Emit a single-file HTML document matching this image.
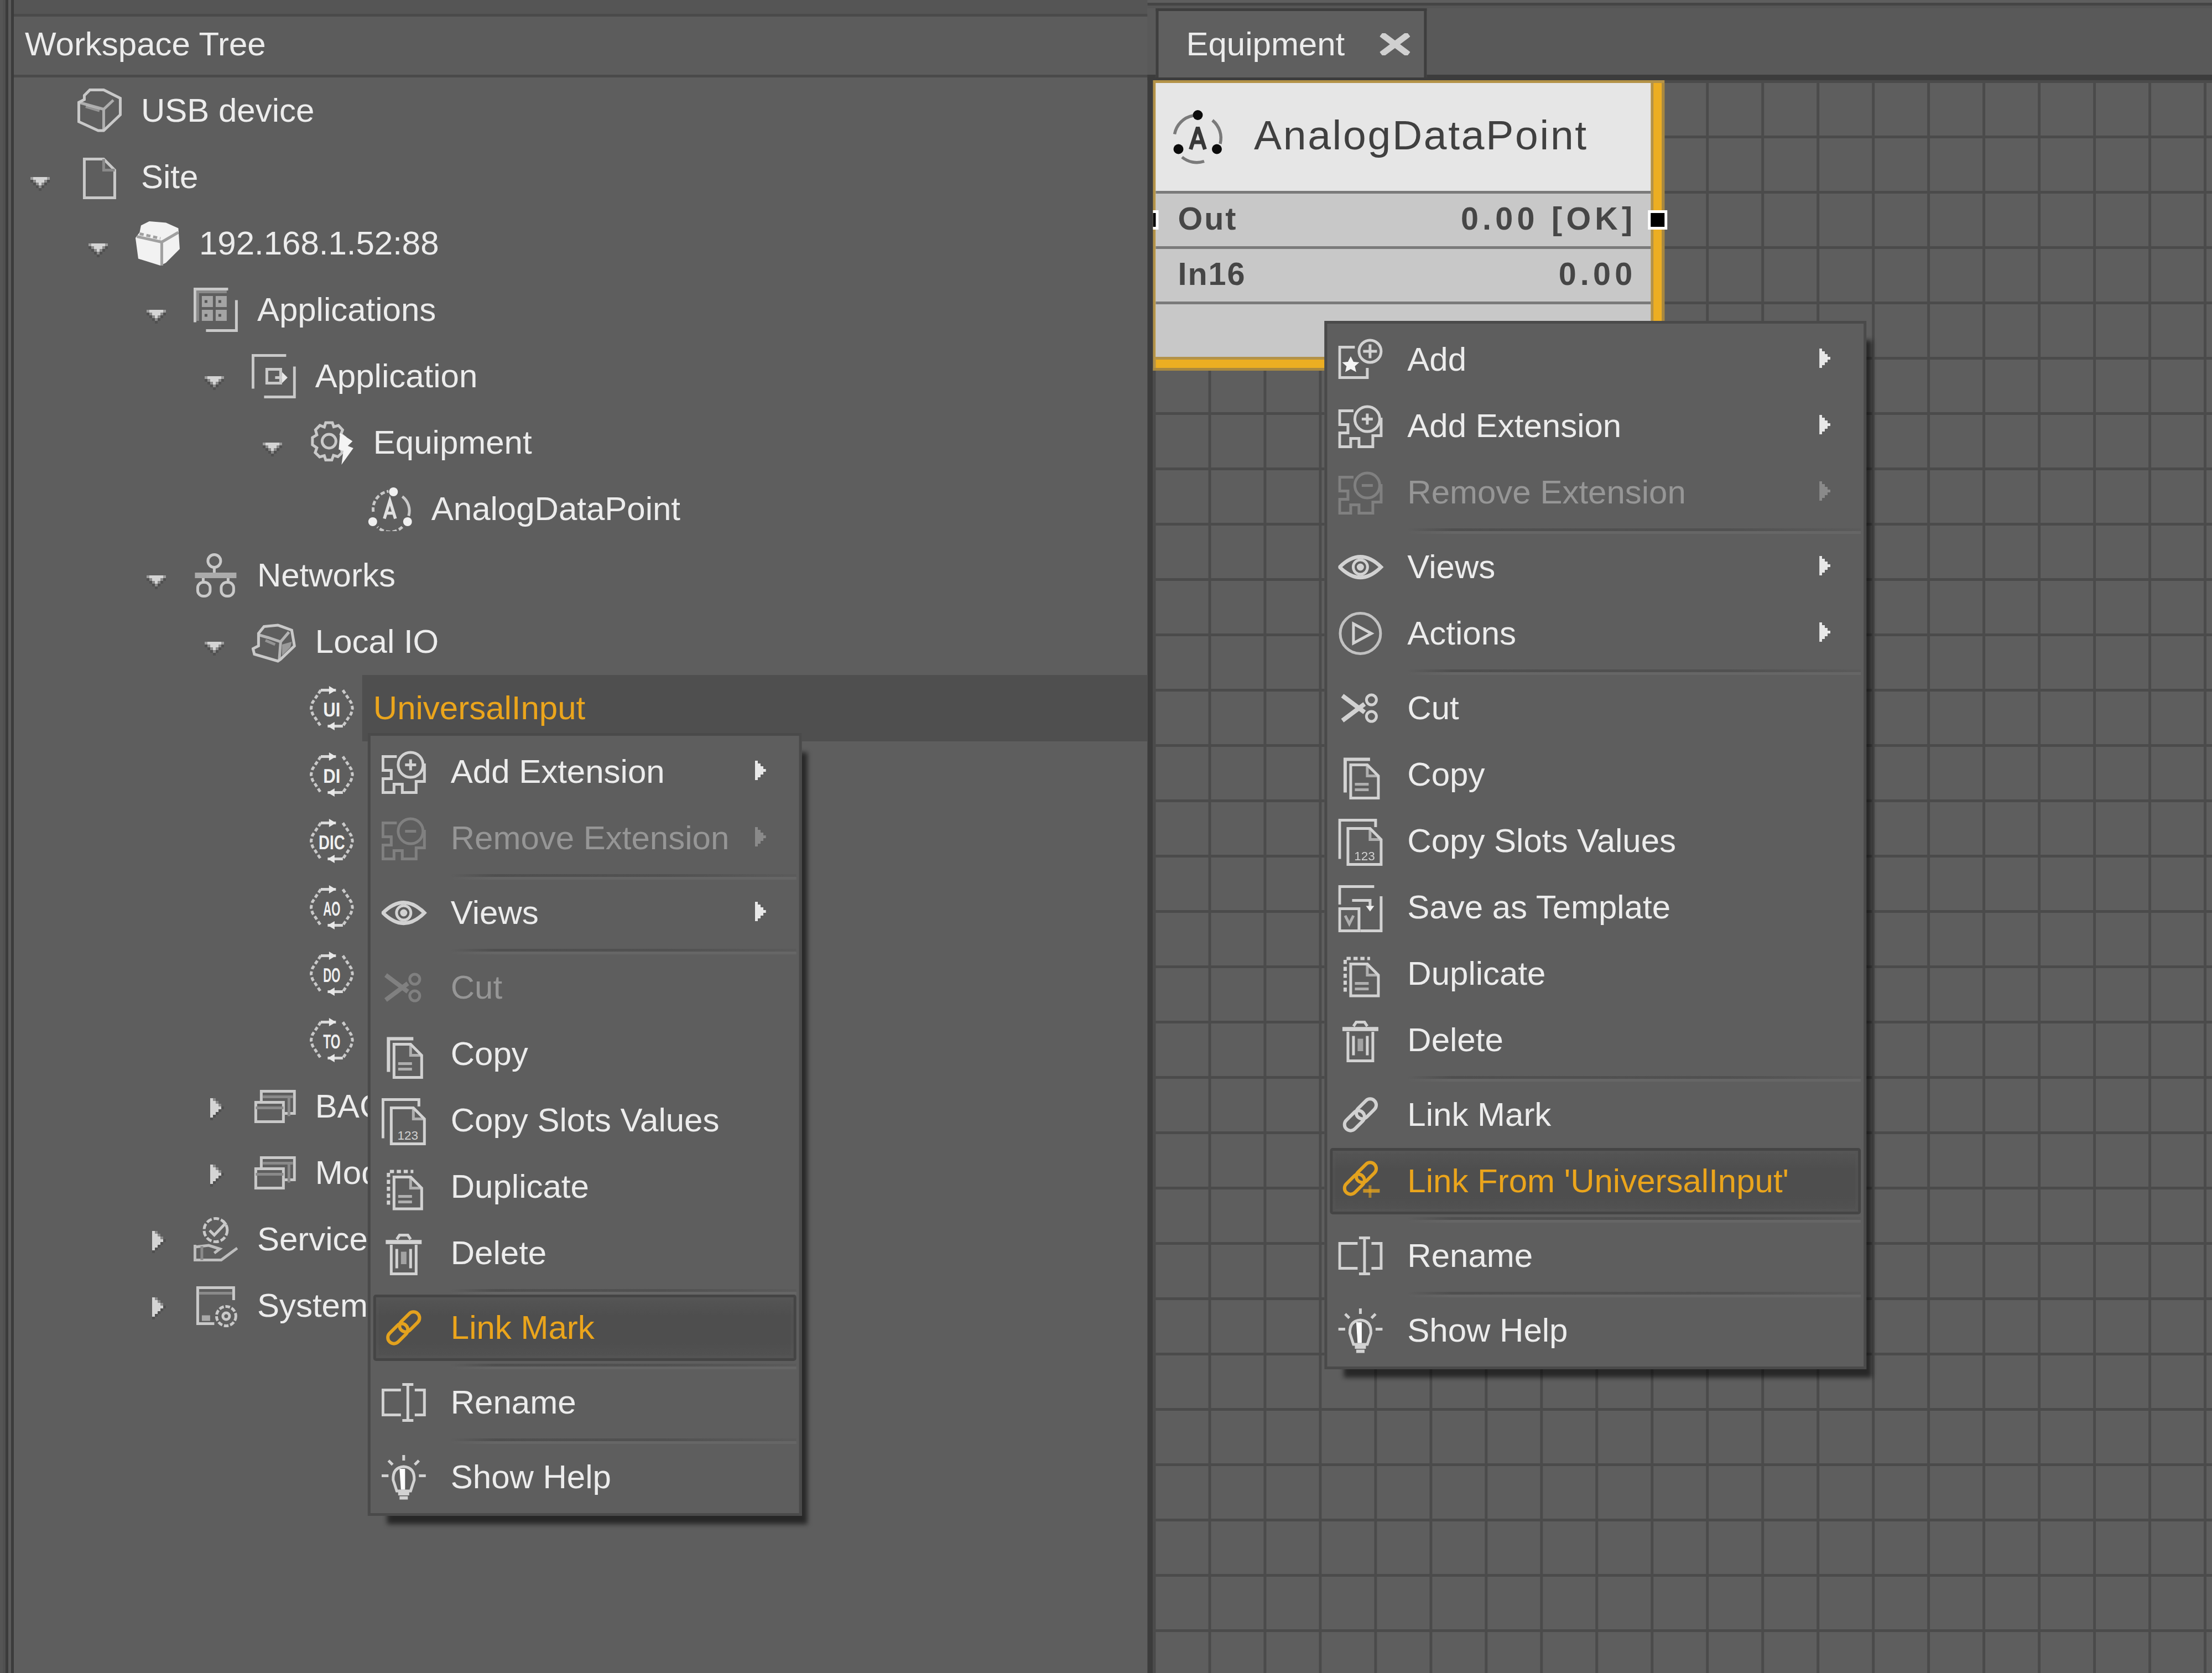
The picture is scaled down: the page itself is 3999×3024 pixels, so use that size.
<!DOCTYPE html>
<html><head><meta charset="utf-8"><title>Workspace</title><style>
html,body{margin:0;padding:0;width:3999px;height:3024px;overflow:hidden;background:#5e5e5e}
#s{position:absolute;left:0;top:0;width:800px;height:605px;transform:scale(4.998750,5.000000);transform-origin:0 0;overflow:hidden;font-family:"Liberation Sans",sans-serif;font-size:12px;color:#ececec}
.a{position:absolute;display:block}
.t{position:absolute;white-space:nowrap;height:24px}
</style></head><body><div id="s">
<div class="a" style="left:0px;top:0px;width:1px;height:605px;background:#555555;"></div>
<div class="a" style="left:1px;top:0px;width:1px;height:605px;background:#505050;"></div>
<div class="a" style="left:2px;top:0px;width:1px;height:605px;background:#3c3c3c;"></div>
<div class="a" style="left:3px;top:0px;width:1px;height:605px;background:#5b5b5b;"></div>
<div class="a" style="left:4px;top:0px;width:1px;height:605px;background:#3c3c3c;"></div>
<div class="a" style="left:5px;top:0px;width:410px;height:5px;background:#555555;"></div>
<div class="a" style="left:5px;top:5px;width:410px;height:1px;background:#4a4a4a;"></div>
<div class="a" style="left:5px;top:6px;width:410px;height:21px;background:#5c5c5c;"></div>
<div class="a" style="left:5px;top:27px;width:410px;height:1px;background:#4a4a4a;"></div>
<div class="a" style="left:5px;top:28px;width:410px;height:577px;background:#5e5e5e;"></div>
<div class="t" style="left:9px;top:3.84px;color:#ececec;font-size:12px;font-weight:normal;line-height:24px;">Workspace Tree</div>
<div class="a" style="left:415px;top:0px;width:385px;height:1px;background:#5e5e5e;"></div>
<div class="a" style="left:415px;top:1px;width:385px;height:1px;background:#454545;"></div>
<div class="a" style="left:415px;top:2px;width:385px;height:1px;background:#555555;"></div>
<div class="a" style="left:415px;top:3px;width:385px;height:24px;background:#595959;"></div>
<div class="a" style="left:415px;top:27px;width:385px;height:2px;background:#3c3c3c;"></div>
<div class="a" style="left:415px;top:27px;width:4px;height:578px;background:#3c3c3c;"></div>
<div class="a" style="left:417px;top:29px;width:383px;height:576px;background:#5e5e5e;background-image:linear-gradient(to right,#4b4b4b 1px,transparent 1px),linear-gradient(to bottom,#4b4b4b 1px,transparent 1px);background-size:20px 20px;"></div>
<div class="a" style="left:418px;top:3px;width:98px;height:25px;background:#5f5f5f;box-sizing:border-box;border:1px solid #3e3e3e;border-bottom:none;"></div>
<div class="t" style="left:429px;top:3.84px;color:#ececec;font-size:12px;font-weight:normal;line-height:24px;">Equipment</div>
<svg class="a" style="left:499px;top:12px;" width="11" height="8" viewBox="0 0 11 8"><path d="M1.5 1 L9.5 7 M9.5 1 L1.5 7" stroke="#d0d0d0" stroke-width="2.2" stroke-linecap="square"/></svg>
<div class="a" style="left:417px;top:29px;width:185px;height:105px;background:#b39248;"></div>
<div class="a" style="left:418px;top:30px;width:183px;height:103px;background:#ecae22;"></div>
<div class="a" style="left:418px;top:30px;width:179px;height:99px;background:#e6e6e6;"></div>
<div class="a" style="left:597px;top:29px;width:1px;height:1px;background:#b39248;"></div>
<div class="a" style="left:597px;top:30px;width:1px;height:99px;background:#b39248;"></div>
<div class="a" style="left:601px;top:30px;width:1px;height:104px;background:#a88840;"></div>
<div class="a" style="left:417px;top:133px;width:185px;height:1px;background:#a88840;"></div>
<div class="a" style="left:418px;top:129px;width:179px;height:1px;background:#b39248;"></div>
<div class="a" style="left:418px;top:30px;width:179px;height:39px;background:#e6e6e6;"></div>
<div class="a" style="left:418px;top:69px;width:179px;height:1px;background:#7a7a7a;"></div>
<div class="a" style="left:418px;top:70px;width:179px;height:19px;background:#c8c8c8;"></div>
<div class="a" style="left:418px;top:89px;width:179px;height:1px;background:#7a7a7a;"></div>
<div class="a" style="left:418px;top:90px;width:179px;height:19px;background:#c8c8c8;"></div>
<div class="a" style="left:418px;top:109px;width:179px;height:1px;background:#7a7a7a;"></div>
<div class="a" style="left:418px;top:110px;width:179px;height:19px;background:#c8c8c8;"></div>
<svg class="a" style="left:423px;top:39px;" width="20" height="21" viewBox="0 0 20 21"><g fill="none" stroke="#7a7a7a" stroke-width="1.1"><path d="M1.8 9.5 A8.3 8.3 0 0 1 8.5 2.8"/><path d="M15.5 4.5 A8.3 8.3 0 0 1 18.3 13"/><path d="M4.5 17.8 A8.3 8.3 0 0 0 12.5 19.3"/></g><g fill="#0c0c0c"><circle cx="10.2" cy="2.6" r="1.8"/><circle cx="3.2" cy="14.9" r="1.8"/><circle cx="17.1" cy="14.9" r="1.8"/></g><path d="M7.6 15 L10.2 7 L12.8 15 M8.5 12.4 L11.9 12.4" stroke="#383838" stroke-width="1.4" stroke-linejoin="bevel" fill="none"/></svg>
<div class="t" style="left:453.5px;top:37.10px;color:#404040;font-size:15px;font-weight:normal;line-height:24px;letter-spacing:0.55px;">AnalogDataPoint</div>
<div class="t" style="left:426px;top:67.02px;color:#464646;font-size:11.5px;font-weight:bold;line-height:24px;letter-spacing:0.6px;">Out</div>
<div class="t" style="right:208.15000000000003px;top:67.00px;color:#464646;font-size:11.5px;font-weight:bold;line-height:24px;letter-spacing:1.45px;">0.00 [OK]</div>
<div class="t" style="left:426px;top:87.02px;color:#464646;font-size:11.5px;font-weight:bold;line-height:24px;letter-spacing:0.4px;">In16</div>
<div class="t" style="right:208.15000000000003px;top:87.00px;color:#464646;font-size:11.5px;font-weight:bold;line-height:24px;letter-spacing:1.45px;">0.00</div>
<div class="a" style="left:596px;top:76px;width:7px;height:7px;background:#ffffff;"></div>
<div class="a" style="left:597px;top:77px;width:5px;height:5px;background:#000000;"></div>
<div class="a" style="left:417px;top:76px;width:2px;height:7px;background:#ffffff;"></div>
<div class="a" style="left:417px;top:77px;width:1px;height:5px;background:#000000;"></div>
<div class="a" style="left:131px;top:244px;width:284px;height:24px;background:#4f4f4f;"></div>
<svg class="a" style="left:28px;top:32px;" width="16" height="16" viewBox="0 0 16 16"><g fill="none" stroke="#c9c9c9"><path d="M4.5 0.5 L9.5 0.5 L15.5 3.5 L15.5 9.5 L9.5 15.2 L7.5 15.2 L0.5 12 L0.5 5 L2.5 4 L2.5 2.5 Z"/><path d="M0.5 5 L9.5 7.5 L9.5 15 M9.5 7.5 L13 4.2" stroke-opacity=".75"/><path d="M3 6.5 L8 8" stroke-opacity=".5"/></g></svg>
<div class="t" style="left:51px;top:27.84px;color:#ececec;font-size:12px;font-weight:normal;line-height:24px;">USB device</div>
<svg class="a" style="left:11px;top:64px;" width="7" height="5" viewBox="0 0 7 5"><g shape-rendering="crispEdges"><rect x="0" y="0" width="1" height="1" fill="#9c9c9c"/><rect x="1" y="0" width="1" height="1" fill="#d4d4d4"/><rect x="2" y="0" width="1" height="1" fill="#d4d4d4"/><rect x="3" y="0" width="1" height="1" fill="#d4d4d4"/><rect x="4" y="0" width="1" height="1" fill="#d4d4d4"/><rect x="5" y="0" width="1" height="1" fill="#d4d4d4"/><rect x="6" y="0" width="1" height="1" fill="#9c9c9c"/><rect x="0" y="1" width="1" height="1" fill="#505050"/><rect x="1" y="1" width="1" height="1" fill="#8a8a8a"/><rect x="2" y="1" width="1" height="1" fill="#d4d4d4"/><rect x="3" y="1" width="1" height="1" fill="#d4d4d4"/><rect x="4" y="1" width="1" height="1" fill="#d4d4d4"/><rect x="5" y="1" width="1" height="1" fill="#8a8a8a"/><rect x="6" y="1" width="1" height="1" fill="#505050"/><rect x="1" y="2" width="1" height="1" fill="#505050"/><rect x="2" y="2" width="1" height="1" fill="#8a8a8a"/><rect x="3" y="2" width="1" height="1" fill="#d4d4d4"/><rect x="4" y="2" width="1" height="1" fill="#8a8a8a"/><rect x="5" y="2" width="1" height="1" fill="#505050"/><rect x="2" y="3" width="1" height="1" fill="#505050"/><rect x="3" y="3" width="1" height="1" fill="#8a8a8a"/><rect x="4" y="3" width="1" height="1" fill="#505050"/><rect x="3" y="4" width="1" height="1" fill="#505050"/></g></svg>
<svg class="a" style="left:28px;top:56px;" width="16" height="16" viewBox="0 0 16 16"><g fill="none" stroke="#c9c9c9"><path d="M2.5 1.5 L9.5 1.5 L13.5 5.5 L13.5 15.5 L2.5 15.5 Z"/><path d="M9.5 1.5 L9.5 5.5 L13.5 5.5" stroke="#8a8a8a"/></g></svg>
<div class="t" style="left:51px;top:51.84px;color:#ececec;font-size:12px;font-weight:normal;line-height:24px;">Site</div>
<svg class="a" style="left:32px;top:88px;" width="7" height="5" viewBox="0 0 7 5"><g shape-rendering="crispEdges"><rect x="0" y="0" width="1" height="1" fill="#9c9c9c"/><rect x="1" y="0" width="1" height="1" fill="#d4d4d4"/><rect x="2" y="0" width="1" height="1" fill="#d4d4d4"/><rect x="3" y="0" width="1" height="1" fill="#d4d4d4"/><rect x="4" y="0" width="1" height="1" fill="#d4d4d4"/><rect x="5" y="0" width="1" height="1" fill="#d4d4d4"/><rect x="6" y="0" width="1" height="1" fill="#9c9c9c"/><rect x="0" y="1" width="1" height="1" fill="#505050"/><rect x="1" y="1" width="1" height="1" fill="#8a8a8a"/><rect x="2" y="1" width="1" height="1" fill="#d4d4d4"/><rect x="3" y="1" width="1" height="1" fill="#d4d4d4"/><rect x="4" y="1" width="1" height="1" fill="#d4d4d4"/><rect x="5" y="1" width="1" height="1" fill="#8a8a8a"/><rect x="6" y="1" width="1" height="1" fill="#505050"/><rect x="1" y="2" width="1" height="1" fill="#505050"/><rect x="2" y="2" width="1" height="1" fill="#8a8a8a"/><rect x="3" y="2" width="1" height="1" fill="#d4d4d4"/><rect x="4" y="2" width="1" height="1" fill="#8a8a8a"/><rect x="5" y="2" width="1" height="1" fill="#505050"/><rect x="2" y="3" width="1" height="1" fill="#505050"/><rect x="3" y="3" width="1" height="1" fill="#8a8a8a"/><rect x="4" y="3" width="1" height="1" fill="#505050"/><rect x="3" y="4" width="1" height="1" fill="#505050"/></g></svg>
<svg class="a" style="left:49px;top:80px;" width="16" height="16" viewBox="0 0 16 16"><path d="M2 1.5 L5 0 L11 0.5 L15.5 2.5 L16 10 L11 15 L9 16 L1 13.5 L0 6 L1.5 4 Z" fill="#f2f2f2"/><g fill="none" stroke="#a0a0a0"><path d="M0.5 5.5 L9.5 7.5 L15.5 4"/><path d="M1.5 4.5 L9 6.2" stroke-dasharray="1.5 1"/><path d="M9.5 7.5 L9.5 16"/></g></svg>
<div class="t" style="left:72px;top:75.84px;color:#ececec;font-size:12px;font-weight:normal;line-height:24px;">192.168.1.52:88</div>
<svg class="a" style="left:53px;top:112px;" width="7" height="5" viewBox="0 0 7 5"><g shape-rendering="crispEdges"><rect x="0" y="0" width="1" height="1" fill="#9c9c9c"/><rect x="1" y="0" width="1" height="1" fill="#d4d4d4"/><rect x="2" y="0" width="1" height="1" fill="#d4d4d4"/><rect x="3" y="0" width="1" height="1" fill="#d4d4d4"/><rect x="4" y="0" width="1" height="1" fill="#d4d4d4"/><rect x="5" y="0" width="1" height="1" fill="#d4d4d4"/><rect x="6" y="0" width="1" height="1" fill="#9c9c9c"/><rect x="0" y="1" width="1" height="1" fill="#505050"/><rect x="1" y="1" width="1" height="1" fill="#8a8a8a"/><rect x="2" y="1" width="1" height="1" fill="#d4d4d4"/><rect x="3" y="1" width="1" height="1" fill="#d4d4d4"/><rect x="4" y="1" width="1" height="1" fill="#d4d4d4"/><rect x="5" y="1" width="1" height="1" fill="#8a8a8a"/><rect x="6" y="1" width="1" height="1" fill="#505050"/><rect x="1" y="2" width="1" height="1" fill="#505050"/><rect x="2" y="2" width="1" height="1" fill="#8a8a8a"/><rect x="3" y="2" width="1" height="1" fill="#d4d4d4"/><rect x="4" y="2" width="1" height="1" fill="#8a8a8a"/><rect x="5" y="2" width="1" height="1" fill="#505050"/><rect x="2" y="3" width="1" height="1" fill="#505050"/><rect x="3" y="3" width="1" height="1" fill="#8a8a8a"/><rect x="4" y="3" width="1" height="1" fill="#505050"/><rect x="3" y="4" width="1" height="1" fill="#505050"/></g></svg>
<svg class="a" style="left:70px;top:104px;" width="16" height="16" viewBox="0 0 16 16"><g fill="none" stroke="#c9c9c9"><path d="M0.5 12.5 L0.5 0.5 L12.5 0.5"/><path d="M4.5 15.5 L15.5 15.5 L15.5 4.5"/><path d="M1.5 12 L1.5 1.5 L12 1.5" stroke="#8a8a8a"/></g><g fill="#a4a4a4"><rect x="3" y="3" width="4" height="4"/><rect x="8" y="3" width="4" height="4"/><rect x="3" y="8" width="4" height="4"/><rect x="8" y="8" width="4" height="4"/></g><g fill="#555"><rect x="4" y="4.5" width="1" height="1"/><rect x="9" y="4.5" width="1" height="1"/><rect x="4" y="9.5" width="1" height="1"/><rect x="9" y="9.5" width="1" height="1"/></g></svg>
<div class="t" style="left:93px;top:99.84px;color:#ececec;font-size:12px;font-weight:normal;line-height:24px;">Applications</div>
<svg class="a" style="left:74px;top:136px;" width="7" height="5" viewBox="0 0 7 5"><g shape-rendering="crispEdges"><rect x="0" y="0" width="1" height="1" fill="#9c9c9c"/><rect x="1" y="0" width="1" height="1" fill="#d4d4d4"/><rect x="2" y="0" width="1" height="1" fill="#d4d4d4"/><rect x="3" y="0" width="1" height="1" fill="#d4d4d4"/><rect x="4" y="0" width="1" height="1" fill="#d4d4d4"/><rect x="5" y="0" width="1" height="1" fill="#d4d4d4"/><rect x="6" y="0" width="1" height="1" fill="#9c9c9c"/><rect x="0" y="1" width="1" height="1" fill="#505050"/><rect x="1" y="1" width="1" height="1" fill="#8a8a8a"/><rect x="2" y="1" width="1" height="1" fill="#d4d4d4"/><rect x="3" y="1" width="1" height="1" fill="#d4d4d4"/><rect x="4" y="1" width="1" height="1" fill="#d4d4d4"/><rect x="5" y="1" width="1" height="1" fill="#8a8a8a"/><rect x="6" y="1" width="1" height="1" fill="#505050"/><rect x="1" y="2" width="1" height="1" fill="#505050"/><rect x="2" y="2" width="1" height="1" fill="#8a8a8a"/><rect x="3" y="2" width="1" height="1" fill="#d4d4d4"/><rect x="4" y="2" width="1" height="1" fill="#8a8a8a"/><rect x="5" y="2" width="1" height="1" fill="#505050"/><rect x="2" y="3" width="1" height="1" fill="#505050"/><rect x="3" y="3" width="1" height="1" fill="#8a8a8a"/><rect x="4" y="3" width="1" height="1" fill="#505050"/><rect x="3" y="4" width="1" height="1" fill="#505050"/></g></svg>
<svg class="a" style="left:91px;top:128px;" width="16" height="16" viewBox="0 0 16 16"><g fill="none" stroke="#c9c9c9"><path d="M0.5 12.5 L0.5 0.5 L12.5 0.5"/><path d="M4.5 15.5 L15.5 15.5 L15.5 4.5"/><rect x="5.5" y="5.5" width="5" height="5"/><path d="M8.5 8.5 L12 8.5"/></g><path d="M11 6.5 L13 8.5 L11 10.5 Z" fill="#e8e8e8"/></svg>
<div class="t" style="left:114px;top:123.84px;color:#ececec;font-size:12px;font-weight:normal;line-height:24px;">Application</div>
<svg class="a" style="left:95px;top:160px;" width="7" height="5" viewBox="0 0 7 5"><g shape-rendering="crispEdges"><rect x="0" y="0" width="1" height="1" fill="#9c9c9c"/><rect x="1" y="0" width="1" height="1" fill="#d4d4d4"/><rect x="2" y="0" width="1" height="1" fill="#d4d4d4"/><rect x="3" y="0" width="1" height="1" fill="#d4d4d4"/><rect x="4" y="0" width="1" height="1" fill="#d4d4d4"/><rect x="5" y="0" width="1" height="1" fill="#d4d4d4"/><rect x="6" y="0" width="1" height="1" fill="#9c9c9c"/><rect x="0" y="1" width="1" height="1" fill="#505050"/><rect x="1" y="1" width="1" height="1" fill="#8a8a8a"/><rect x="2" y="1" width="1" height="1" fill="#d4d4d4"/><rect x="3" y="1" width="1" height="1" fill="#d4d4d4"/><rect x="4" y="1" width="1" height="1" fill="#d4d4d4"/><rect x="5" y="1" width="1" height="1" fill="#8a8a8a"/><rect x="6" y="1" width="1" height="1" fill="#505050"/><rect x="1" y="2" width="1" height="1" fill="#505050"/><rect x="2" y="2" width="1" height="1" fill="#8a8a8a"/><rect x="3" y="2" width="1" height="1" fill="#d4d4d4"/><rect x="4" y="2" width="1" height="1" fill="#8a8a8a"/><rect x="5" y="2" width="1" height="1" fill="#505050"/><rect x="2" y="3" width="1" height="1" fill="#505050"/><rect x="3" y="3" width="1" height="1" fill="#8a8a8a"/><rect x="4" y="3" width="1" height="1" fill="#505050"/><rect x="3" y="4" width="1" height="1" fill="#505050"/></g></svg>
<svg class="a" style="left:112px;top:152px;" width="16" height="16" viewBox="0 0 16 16"><g fill="none" stroke="#c9c9c9"><circle cx="7" cy="7.5" r="2.5"/><path d="M5.8 0.8 L8.2 0.8 L8.7 2.3 L10.4 1.8 L11.9 3.4 L11.3 5 L12.8 6.2 L12.8 8.8 L11.3 9.8 L11.8 11.6 L10.2 13.1 L8.6 12.6 L8 14.3 L5.8 14.3 L5.3 12.7 L3.6 13.2 L2 11.6 L2.6 9.9 L1 8.8 L1 6.2 L2.6 5.2 L2.1 3.4 L3.7 1.8 L5.3 2.4 Z"/></g><path d="M11 4.5 L15.5 7.5 L13.8 9.2 L15.8 10 L11.5 16 L12.2 11 L10.5 10.5 Z" fill="#f4f4f4"/></svg>
<div class="t" style="left:135px;top:147.84px;color:#ececec;font-size:12px;font-weight:normal;line-height:24px;">Equipment</div>
<svg class="a" style="left:133px;top:176px;" width="16" height="16" viewBox="0 0 16 16"><g fill="none" stroke="#c9c9c9"><path d="M2 9 A6.5 6.5 0 0 1 7.5 1.6" stroke-dasharray="1.6 .8"/><path d="M12.5 3.5 A6.5 6.5 0 0 1 14.8 10.5"/><path d="M12.5 14.5 A6.5 6.5 0 0 1 3.5 14.5" stroke-dasharray="1.6 .8"/></g><g fill="#f0f0f0"><circle cx="9.3" cy="1.8" r="1.6"/><circle cx="1.8" cy="12.6" r="1.6"/><circle cx="14.4" cy="12.6" r="1.6"/></g><path d="M6 11.5 L8 5 L10 11.5 M6.8 9.5 L9.2 9.5" stroke="#e0e0e0" fill="none" stroke-width="1.1"/></svg>
<div class="t" style="left:156px;top:171.84px;color:#ececec;font-size:12px;font-weight:normal;line-height:24px;">AnalogDataPoint</div>
<svg class="a" style="left:53px;top:208px;" width="7" height="5" viewBox="0 0 7 5"><g shape-rendering="crispEdges"><rect x="0" y="0" width="1" height="1" fill="#9c9c9c"/><rect x="1" y="0" width="1" height="1" fill="#d4d4d4"/><rect x="2" y="0" width="1" height="1" fill="#d4d4d4"/><rect x="3" y="0" width="1" height="1" fill="#d4d4d4"/><rect x="4" y="0" width="1" height="1" fill="#d4d4d4"/><rect x="5" y="0" width="1" height="1" fill="#d4d4d4"/><rect x="6" y="0" width="1" height="1" fill="#9c9c9c"/><rect x="0" y="1" width="1" height="1" fill="#505050"/><rect x="1" y="1" width="1" height="1" fill="#8a8a8a"/><rect x="2" y="1" width="1" height="1" fill="#d4d4d4"/><rect x="3" y="1" width="1" height="1" fill="#d4d4d4"/><rect x="4" y="1" width="1" height="1" fill="#d4d4d4"/><rect x="5" y="1" width="1" height="1" fill="#8a8a8a"/><rect x="6" y="1" width="1" height="1" fill="#505050"/><rect x="1" y="2" width="1" height="1" fill="#505050"/><rect x="2" y="2" width="1" height="1" fill="#8a8a8a"/><rect x="3" y="2" width="1" height="1" fill="#d4d4d4"/><rect x="4" y="2" width="1" height="1" fill="#8a8a8a"/><rect x="5" y="2" width="1" height="1" fill="#505050"/><rect x="2" y="3" width="1" height="1" fill="#505050"/><rect x="3" y="3" width="1" height="1" fill="#8a8a8a"/><rect x="4" y="3" width="1" height="1" fill="#505050"/><rect x="3" y="4" width="1" height="1" fill="#505050"/></g></svg>
<svg class="a" style="left:70px;top:200px;" width="16" height="16" viewBox="0 0 16 16"><g fill="none" stroke="#c9c9c9"><circle cx="7.5" cy="2.8" r="2.3"/><path d="M7.5 5 L7.5 7 M3.5 9 L3.5 10.5 M12.5 9 L12.5 10.5"/><rect x="1.5" y="10.5" width="4.5" height="5" rx="2"/><rect x="10" y="10.5" width="4.5" height="5" rx="2"/></g><rect x="0.5" y="7" width="15" height="2" fill="#ababab"/></svg>
<div class="t" style="left:93px;top:195.84px;color:#ececec;font-size:12px;font-weight:normal;line-height:24px;">Networks</div>
<svg class="a" style="left:74px;top:232px;" width="7" height="5" viewBox="0 0 7 5"><g shape-rendering="crispEdges"><rect x="0" y="0" width="1" height="1" fill="#9c9c9c"/><rect x="1" y="0" width="1" height="1" fill="#d4d4d4"/><rect x="2" y="0" width="1" height="1" fill="#d4d4d4"/><rect x="3" y="0" width="1" height="1" fill="#d4d4d4"/><rect x="4" y="0" width="1" height="1" fill="#d4d4d4"/><rect x="5" y="0" width="1" height="1" fill="#d4d4d4"/><rect x="6" y="0" width="1" height="1" fill="#9c9c9c"/><rect x="0" y="1" width="1" height="1" fill="#505050"/><rect x="1" y="1" width="1" height="1" fill="#8a8a8a"/><rect x="2" y="1" width="1" height="1" fill="#d4d4d4"/><rect x="3" y="1" width="1" height="1" fill="#d4d4d4"/><rect x="4" y="1" width="1" height="1" fill="#d4d4d4"/><rect x="5" y="1" width="1" height="1" fill="#8a8a8a"/><rect x="6" y="1" width="1" height="1" fill="#505050"/><rect x="1" y="2" width="1" height="1" fill="#505050"/><rect x="2" y="2" width="1" height="1" fill="#8a8a8a"/><rect x="3" y="2" width="1" height="1" fill="#d4d4d4"/><rect x="4" y="2" width="1" height="1" fill="#8a8a8a"/><rect x="5" y="2" width="1" height="1" fill="#505050"/><rect x="2" y="3" width="1" height="1" fill="#505050"/><rect x="3" y="3" width="1" height="1" fill="#8a8a8a"/><rect x="4" y="3" width="1" height="1" fill="#505050"/><rect x="3" y="4" width="1" height="1" fill="#505050"/></g></svg>
<svg class="a" style="left:91px;top:224px;" width="16" height="16" viewBox="0 0 16 16"><g fill="none" stroke="#c9c9c9"><path d="M4.5 2.5 L9.5 2 L14.5 3.8 L15.5 9.5 L10.5 14.3 L9.5 15 L1 12.5 L0.5 10.5 L2.5 9.5 L2.5 5 Z"/><path d="M2.5 5.5 L6 6.5 L10.5 8 L13.5 4.5 M10.5 8 L10 14.5" stroke-opacity=".8"/><path d="M5 7.5 L8.5 9" stroke-opacity=".5"/></g><path d="M11 9 L14.5 8 L14 10 L11 13 Z" fill="#9a9a9a"/></svg>
<div class="t" style="left:114px;top:219.84px;color:#ececec;font-size:12px;font-weight:normal;line-height:24px;">Local IO</div>
<svg class="a" style="left:112px;top:248px;" width="16" height="16" viewBox="0 0 16 16"><g fill="none" stroke="#c9c9c9" stroke-dasharray="1.4 .8"><path d="M4 1.5 L1 6 L0.5 8 L1 10 L4 14.5"/><path d="M12 1.5 L15 6 L15.5 8 L15 10 L12 14.5"/></g><g stroke="#d8d8d8" fill="none"><path d="M4 1.5 L9.5 1.5 M6.5 14.5 L12 14.5"/></g><path d="M7 0 L9.5 1.5 L7 3 Z M9 13 L6.5 14.5 L9 16 Z" fill="#e8e8e8"/><text x="8" y="11" font-size="7.2" font-weight="bold" font-family="Liberation Sans" fill="#f0f0f0" text-anchor="middle" textLength="6.2" lengthAdjust="spacingAndGlyphs" style="text-rendering:geometricPrecision">UI</text></svg>
<div class="t" style="left:135px;top:243.84px;color:#eba51c;font-size:12px;font-weight:normal;line-height:24px;">UniversalInput</div>
<svg class="a" style="left:112px;top:272px;" width="16" height="16" viewBox="0 0 16 16"><g fill="none" stroke="#c9c9c9" stroke-dasharray="1.4 .8"><path d="M4 1.5 L1 6 L0.5 8 L1 10 L4 14.5"/><path d="M12 1.5 L15 6 L15.5 8 L15 10 L12 14.5"/></g><g stroke="#d8d8d8" fill="none"><path d="M4 1.5 L9.5 1.5 M6.5 14.5 L12 14.5"/></g><path d="M7 0 L9.5 1.5 L7 3 Z M9 13 L6.5 14.5 L9 16 Z" fill="#e8e8e8"/><text x="8" y="11" font-size="7.2" font-weight="bold" font-family="Liberation Sans" fill="#f0f0f0" text-anchor="middle" textLength="6.2" lengthAdjust="spacingAndGlyphs" style="text-rendering:geometricPrecision">DI</text></svg>
<div class="t" style="left:135px;top:267.84px;color:#ececec;font-size:12px;font-weight:normal;line-height:24px;">DI</div>
<svg class="a" style="left:112px;top:296px;" width="16" height="16" viewBox="0 0 16 16"><g fill="none" stroke="#c9c9c9" stroke-dasharray="1.4 .8"><path d="M4 1.5 L1 6 L0.5 8 L1 10 L4 14.5"/><path d="M12 1.5 L15 6 L15.5 8 L15 10 L12 14.5"/></g><g stroke="#d8d8d8" fill="none"><path d="M4 1.5 L9.5 1.5 M6.5 14.5 L12 14.5"/></g><path d="M7 0 L9.5 1.5 L7 3 Z M9 13 L6.5 14.5 L9 16 Z" fill="#e8e8e8"/><text x="8" y="11" font-size="7.2" font-weight="bold" font-family="Liberation Sans" fill="#f0f0f0" text-anchor="middle" textLength="9.5" lengthAdjust="spacingAndGlyphs" style="text-rendering:geometricPrecision">DIC</text></svg>
<div class="t" style="left:135px;top:291.84px;color:#ececec;font-size:12px;font-weight:normal;line-height:24px;">DIC</div>
<svg class="a" style="left:112px;top:320px;" width="16" height="16" viewBox="0 0 16 16"><g fill="none" stroke="#c9c9c9" stroke-dasharray="1.4 .8"><path d="M4 1.5 L1 6 L0.5 8 L1 10 L4 14.5"/><path d="M12 1.5 L15 6 L15.5 8 L15 10 L12 14.5"/></g><g stroke="#d8d8d8" fill="none"><path d="M4 1.5 L9.5 1.5 M6.5 14.5 L12 14.5"/></g><path d="M7 0 L9.5 1.5 L7 3 Z M9 13 L6.5 14.5 L9 16 Z" fill="#e8e8e8"/><text x="8" y="11" font-size="7.2" font-weight="bold" font-family="Liberation Sans" fill="#f0f0f0" text-anchor="middle" textLength="6.2" lengthAdjust="spacingAndGlyphs" style="text-rendering:geometricPrecision">AO</text></svg>
<div class="t" style="left:135px;top:315.84px;color:#ececec;font-size:12px;font-weight:normal;line-height:24px;">AO</div>
<svg class="a" style="left:112px;top:344px;" width="16" height="16" viewBox="0 0 16 16"><g fill="none" stroke="#c9c9c9" stroke-dasharray="1.4 .8"><path d="M4 1.5 L1 6 L0.5 8 L1 10 L4 14.5"/><path d="M12 1.5 L15 6 L15.5 8 L15 10 L12 14.5"/></g><g stroke="#d8d8d8" fill="none"><path d="M4 1.5 L9.5 1.5 M6.5 14.5 L12 14.5"/></g><path d="M7 0 L9.5 1.5 L7 3 Z M9 13 L6.5 14.5 L9 16 Z" fill="#e8e8e8"/><text x="8" y="11" font-size="7.2" font-weight="bold" font-family="Liberation Sans" fill="#f0f0f0" text-anchor="middle" textLength="6.2" lengthAdjust="spacingAndGlyphs" style="text-rendering:geometricPrecision">DO</text></svg>
<div class="t" style="left:135px;top:339.84px;color:#ececec;font-size:12px;font-weight:normal;line-height:24px;">DO</div>
<svg class="a" style="left:112px;top:368px;" width="16" height="16" viewBox="0 0 16 16"><g fill="none" stroke="#c9c9c9" stroke-dasharray="1.4 .8"><path d="M4 1.5 L1 6 L0.5 8 L1 10 L4 14.5"/><path d="M12 1.5 L15 6 L15.5 8 L15 10 L12 14.5"/></g><g stroke="#d8d8d8" fill="none"><path d="M4 1.5 L9.5 1.5 M6.5 14.5 L12 14.5"/></g><path d="M7 0 L9.5 1.5 L7 3 Z M9 13 L6.5 14.5 L9 16 Z" fill="#e8e8e8"/><text x="8" y="11" font-size="7.2" font-weight="bold" font-family="Liberation Sans" fill="#f0f0f0" text-anchor="middle" textLength="6.2" lengthAdjust="spacingAndGlyphs" style="text-rendering:geometricPrecision">TO</text></svg>
<div class="t" style="left:135px;top:363.84px;color:#ececec;font-size:12px;font-weight:normal;line-height:24px;">TO</div>
<svg class="a" style="left:76px;top:397px;" width="5" height="8" viewBox="0 0 5 8"><g shape-rendering="crispEdges"><rect x="0" y="0" width="1" height="1" fill="#d4d4d4"/><rect x="0" y="1" width="1" height="1" fill="#d4d4d4"/><rect x="0" y="2" width="1" height="1" fill="#d4d4d4"/><rect x="0" y="3" width="1" height="1" fill="#d4d4d4"/><rect x="0" y="4" width="1" height="1" fill="#d4d4d4"/><rect x="0" y="5" width="1" height="1" fill="#d4d4d4"/><rect x="0" y="6" width="1" height="1" fill="#d4d4d4"/><rect x="1" y="1" width="1" height="1" fill="#d4d4d4"/><rect x="1" y="2" width="1" height="1" fill="#d4d4d4"/><rect x="1" y="3" width="1" height="1" fill="#d4d4d4"/><rect x="1" y="4" width="1" height="1" fill="#d4d4d4"/><rect x="1" y="5" width="1" height="1" fill="#d4d4d4"/><rect x="2" y="2" width="1" height="1" fill="#d4d4d4"/><rect x="2" y="3" width="1" height="1" fill="#d4d4d4"/><rect x="2" y="4" width="1" height="1" fill="#d4d4d4"/><rect x="3" y="3" width="1" height="1" fill="#d4d4d4"/><rect x="1" y="0" width="1" height="1" fill="#8a8a8a"/><rect x="2" y="1" width="1" height="1" fill="#8a8a8a"/><rect x="3" y="2" width="1" height="1" fill="#8a8a8a"/><rect x="3" y="4" width="1" height="1" fill="#505050"/><rect x="2" y="5" width="1" height="1" fill="#505050"/><rect x="1" y="6" width="1" height="1" fill="#505050"/><rect x="0" y="7" width="1" height="1" fill="#505050"/><rect x="4" y="3" width="1" height="1" fill="#505050"/></g></svg>
<svg class="a" style="left:91px;top:392px;" width="16" height="16" viewBox="0 0 16 16"><g fill="none" stroke="#c9c9c9"><rect x="1.5" y="6.5" width="10" height="7"/><path d="M1.5 8.5 L11.5 8.5" stroke="#8a8a8a"/><path d="M3.5 6 L3.5 2.5 L15.5 2.5 L15.5 10.5 L12 10.5"/><path d="M4 4.5 L15 4.5" stroke="#8a8a8a"/><path d="M13.5 4.5 L13.5 11.5" stroke="#8a8a8a"/></g></svg>
<div class="t" style="left:114px;top:387.84px;color:#ececec;font-size:12px;font-weight:normal;line-height:24px;">BACnet</div>
<svg class="a" style="left:76px;top:421px;" width="5" height="8" viewBox="0 0 5 8"><g shape-rendering="crispEdges"><rect x="0" y="0" width="1" height="1" fill="#d4d4d4"/><rect x="0" y="1" width="1" height="1" fill="#d4d4d4"/><rect x="0" y="2" width="1" height="1" fill="#d4d4d4"/><rect x="0" y="3" width="1" height="1" fill="#d4d4d4"/><rect x="0" y="4" width="1" height="1" fill="#d4d4d4"/><rect x="0" y="5" width="1" height="1" fill="#d4d4d4"/><rect x="0" y="6" width="1" height="1" fill="#d4d4d4"/><rect x="1" y="1" width="1" height="1" fill="#d4d4d4"/><rect x="1" y="2" width="1" height="1" fill="#d4d4d4"/><rect x="1" y="3" width="1" height="1" fill="#d4d4d4"/><rect x="1" y="4" width="1" height="1" fill="#d4d4d4"/><rect x="1" y="5" width="1" height="1" fill="#d4d4d4"/><rect x="2" y="2" width="1" height="1" fill="#d4d4d4"/><rect x="2" y="3" width="1" height="1" fill="#d4d4d4"/><rect x="2" y="4" width="1" height="1" fill="#d4d4d4"/><rect x="3" y="3" width="1" height="1" fill="#d4d4d4"/><rect x="1" y="0" width="1" height="1" fill="#8a8a8a"/><rect x="2" y="1" width="1" height="1" fill="#8a8a8a"/><rect x="3" y="2" width="1" height="1" fill="#8a8a8a"/><rect x="3" y="4" width="1" height="1" fill="#505050"/><rect x="2" y="5" width="1" height="1" fill="#505050"/><rect x="1" y="6" width="1" height="1" fill="#505050"/><rect x="0" y="7" width="1" height="1" fill="#505050"/><rect x="4" y="3" width="1" height="1" fill="#505050"/></g></svg>
<svg class="a" style="left:91px;top:416px;" width="16" height="16" viewBox="0 0 16 16"><g fill="none" stroke="#c9c9c9"><rect x="1.5" y="6.5" width="10" height="7"/><path d="M1.5 8.5 L11.5 8.5" stroke="#8a8a8a"/><path d="M3.5 6 L3.5 2.5 L15.5 2.5 L15.5 10.5 L12 10.5"/><path d="M4 4.5 L15 4.5" stroke="#8a8a8a"/><path d="M13.5 4.5 L13.5 11.5" stroke="#8a8a8a"/></g></svg>
<div class="t" style="left:114px;top:411.84px;color:#ececec;font-size:12px;font-weight:normal;line-height:24px;">Modbus</div>
<svg class="a" style="left:55px;top:445px;" width="5" height="8" viewBox="0 0 5 8"><g shape-rendering="crispEdges"><rect x="0" y="0" width="1" height="1" fill="#d4d4d4"/><rect x="0" y="1" width="1" height="1" fill="#d4d4d4"/><rect x="0" y="2" width="1" height="1" fill="#d4d4d4"/><rect x="0" y="3" width="1" height="1" fill="#d4d4d4"/><rect x="0" y="4" width="1" height="1" fill="#d4d4d4"/><rect x="0" y="5" width="1" height="1" fill="#d4d4d4"/><rect x="0" y="6" width="1" height="1" fill="#d4d4d4"/><rect x="1" y="1" width="1" height="1" fill="#d4d4d4"/><rect x="1" y="2" width="1" height="1" fill="#d4d4d4"/><rect x="1" y="3" width="1" height="1" fill="#d4d4d4"/><rect x="1" y="4" width="1" height="1" fill="#d4d4d4"/><rect x="1" y="5" width="1" height="1" fill="#d4d4d4"/><rect x="2" y="2" width="1" height="1" fill="#d4d4d4"/><rect x="2" y="3" width="1" height="1" fill="#d4d4d4"/><rect x="2" y="4" width="1" height="1" fill="#d4d4d4"/><rect x="3" y="3" width="1" height="1" fill="#d4d4d4"/><rect x="1" y="0" width="1" height="1" fill="#8a8a8a"/><rect x="2" y="1" width="1" height="1" fill="#8a8a8a"/><rect x="3" y="2" width="1" height="1" fill="#8a8a8a"/><rect x="3" y="4" width="1" height="1" fill="#505050"/><rect x="2" y="5" width="1" height="1" fill="#505050"/><rect x="1" y="6" width="1" height="1" fill="#505050"/><rect x="0" y="7" width="1" height="1" fill="#505050"/><rect x="4" y="3" width="1" height="1" fill="#505050"/></g></svg>
<svg class="a" style="left:70px;top:440px;" width="16" height="16" viewBox="0 0 16 16"><g fill="none" stroke="#c9c9c9"><circle cx="8" cy="4.7" r="4.2" stroke-dasharray="2 .7"/><path d="M5.8 4.8 L7.5 6.5 L11.8 2" /><path d="M0.5 10 L0.5 15.5 L10 15.5 L15.8 11.2 M0.5 10.8 L5.5 10.2 L9.5 11.5 L7.5 13" stroke-opacity=".9"/><path d="M3 10.5 L3 15.5" stroke="#8a8a8a"/></g></svg>
<div class="t" style="left:93px;top:435.84px;color:#ececec;font-size:12px;font-weight:normal;line-height:24px;">Services</div>
<svg class="a" style="left:55px;top:469px;" width="5" height="8" viewBox="0 0 5 8"><g shape-rendering="crispEdges"><rect x="0" y="0" width="1" height="1" fill="#d4d4d4"/><rect x="0" y="1" width="1" height="1" fill="#d4d4d4"/><rect x="0" y="2" width="1" height="1" fill="#d4d4d4"/><rect x="0" y="3" width="1" height="1" fill="#d4d4d4"/><rect x="0" y="4" width="1" height="1" fill="#d4d4d4"/><rect x="0" y="5" width="1" height="1" fill="#d4d4d4"/><rect x="0" y="6" width="1" height="1" fill="#d4d4d4"/><rect x="1" y="1" width="1" height="1" fill="#d4d4d4"/><rect x="1" y="2" width="1" height="1" fill="#d4d4d4"/><rect x="1" y="3" width="1" height="1" fill="#d4d4d4"/><rect x="1" y="4" width="1" height="1" fill="#d4d4d4"/><rect x="1" y="5" width="1" height="1" fill="#d4d4d4"/><rect x="2" y="2" width="1" height="1" fill="#d4d4d4"/><rect x="2" y="3" width="1" height="1" fill="#d4d4d4"/><rect x="2" y="4" width="1" height="1" fill="#d4d4d4"/><rect x="3" y="3" width="1" height="1" fill="#d4d4d4"/><rect x="1" y="0" width="1" height="1" fill="#8a8a8a"/><rect x="2" y="1" width="1" height="1" fill="#8a8a8a"/><rect x="3" y="2" width="1" height="1" fill="#8a8a8a"/><rect x="3" y="4" width="1" height="1" fill="#505050"/><rect x="2" y="5" width="1" height="1" fill="#505050"/><rect x="1" y="6" width="1" height="1" fill="#505050"/><rect x="0" y="7" width="1" height="1" fill="#505050"/><rect x="4" y="3" width="1" height="1" fill="#505050"/></g></svg>
<svg class="a" style="left:70px;top:464px;" width="16" height="16" viewBox="0 0 16 16"><g fill="none" stroke="#c9c9c9"><path d="M7.5 14.5 L1.5 14.5 L1.5 1.5 L14.5 1.5 L14.5 6"/><path d="M2 3.5 L14 3.5" stroke="#8a8a8a"/><circle cx="11.8" cy="11.8" r="3.5" stroke-dasharray="1.7 .6"/><circle cx="11.8" cy="11.8" r="1.2"/></g><rect x="3" y="11.5" width="3" height="2" fill="#a8a8a8"/></svg>
<div class="t" style="left:93px;top:459.84px;color:#ececec;font-size:12px;font-weight:normal;line-height:24px;">System</div>
<div class="a" style="left:139.5px;top:271.5px;width:152.5px;height:279px;background:rgba(0,0,0,.58);filter:blur(0.9px)"></div>
<div class="a" style="left:133px;top:265px;width:157px;height:283px;background:#5e5e5e;box-sizing:border-box;border:1px solid #4a4a4a;"></div>
<svg class="a" style="left:138px;top:271px;" width="17" height="17" viewBox="0 0 17 17"><g fill="none" stroke="#d2d2d2"><path d="M5.5 2.5 L0.5 2.5 L0.5 7.5 L3.5 7.5 L3.5 10.5 L0.5 10.5 L0.5 15.5 L4.5 15.5 L4.5 12.5 L7.5 12.5 L7.5 15.5 L12.5 15.5 L12.5 11.5 L15.5 11.5 L15.5 5"/><circle cx="10.5" cy="5.5" r="4.5"/><path d="M10.5 3.5 L10.5 7.5 M8.5 5.5 L12.5 5.5"/></g></svg>
<div class="t" style="left:163px;top:266.84px;color:#ececec;font-size:12px;font-weight:normal;line-height:24px;">Add Extension</div>
<svg class="a" style="left:273px;top:275px;" width="4" height="7" viewBox="0 0 4 7"><path d="M0 0 H1 V1 H2 V2 H3 V3 H4 V4 H3 V5 H2 V6 H1 V7 H0 Z" fill="#e8e8e8" shape-rendering="crispEdges"/></svg>
<svg class="a" style="left:138px;top:295px;" width="17" height="17" viewBox="0 0 17 17"><g fill="none" stroke="#808080"><path d="M5.5 2.5 L0.5 2.5 L0.5 7.5 L3.5 7.5 L3.5 10.5 L0.5 10.5 L0.5 15.5 L4.5 15.5 L4.5 12.5 L7.5 12.5 L7.5 15.5 L12.5 15.5 L12.5 11.5 L15.5 11.5 L15.5 5"/><circle cx="10.5" cy="5.5" r="4.5"/><path d="M8.5 5.5 L12.5 5.5"/></g></svg>
<div class="t" style="left:163px;top:290.84px;color:#969696;font-size:12px;font-weight:normal;line-height:24px;">Remove Extension</div>
<svg class="a" style="left:273px;top:299px;" width="4" height="7" viewBox="0 0 4 7"><path d="M0 0 H1 V1 H2 V2 H3 V3 H4 V4 H3 V5 H2 V6 H1 V7 H0 Z" fill="#8a8a8a" shape-rendering="crispEdges"/></svg>
<div class="a" style="left:163px;top:316px;width:125px;height:1px;background:linear-gradient(to right,rgba(79,79,79,0),#4f4f4f 16px,#515151 77px,rgba(85,85,85,.35))"></div>
<div class="a" style="left:163px;top:317px;width:125px;height:1px;background:linear-gradient(to right,rgba(102,102,102,0),#666666 16px,#666666)"></div>
<svg class="a" style="left:138px;top:322px;" width="17" height="17" viewBox="0 0 17 17"><g fill="none" stroke="#d2d2d2"><path d="M0.5 8 Q8 0.5 15.5 8 Q8 15.5 0.5 8 Z" stroke-width="1.3"/><circle cx="8" cy="8" r="2.6"/><circle cx="8" cy="8" r=".8" fill="#d2d2d2"/></g></svg>
<div class="t" style="left:163px;top:317.84px;color:#ececec;font-size:12px;font-weight:normal;line-height:24px;">Views</div>
<svg class="a" style="left:273px;top:326px;" width="4" height="7" viewBox="0 0 4 7"><path d="M0 0 H1 V1 H2 V2 H3 V3 H4 V4 H3 V5 H2 V6 H1 V7 H0 Z" fill="#e8e8e8" shape-rendering="crispEdges"/></svg>
<div class="a" style="left:163px;top:343px;width:125px;height:1px;background:linear-gradient(to right,rgba(79,79,79,0),#4f4f4f 16px,#515151 77px,rgba(85,85,85,.35))"></div>
<div class="a" style="left:163px;top:344px;width:125px;height:1px;background:linear-gradient(to right,rgba(102,102,102,0),#666666 16px,#666666)"></div>
<svg class="a" style="left:138px;top:349px;" width="17" height="17" viewBox="0 0 17 17"><g fill="none" stroke="#808080"><path d="M1.5 3.5 L9.5 9.5 M1.5 12.5 L9.5 6.5" stroke-width="1.6"/><circle cx="12" cy="5" r="1.8"/><circle cx="12" cy="11" r="1.8"/></g></svg>
<div class="t" style="left:163px;top:344.84px;color:#969696;font-size:12px;font-weight:normal;line-height:24px;">Cut</div>
<svg class="a" style="left:138px;top:373px;" width="17" height="17" viewBox="0 0 17 17"><g fill="none" stroke="#d2d2d2"><path d="M2.5 14.5 L2.5 2.5 L11.5 2.5" stroke-width="1.2"/><path d="M4.5 16.5 L4.5 4.5 L10.5 4.5 L14.5 8.5 L14.5 16.5 Z"/><path d="M10.5 4.5 L10.5 8.5 L14.5 8.5" stroke-opacity=".7"/><path d="M6 11.5 L11 11.5 M6 13.5 L11 13.5" stroke-opacity=".7"/></g></svg>
<div class="t" style="left:163px;top:368.84px;color:#ececec;font-size:12px;font-weight:normal;line-height:24px;">Copy</div>
<svg class="a" style="left:138px;top:397px;" width="17" height="17" viewBox="0 0 17 17"><g fill="none" stroke="#d2d2d2"><path d="M0.5 14.5 L0.5 0.5 L13.5 0.5 L13.5 3"/><path d="M3.5 16.5 L3.5 3.5 L11.5 3.5 L15.5 7.5 L15.5 16.5 Z"/><path d="M11.5 3.5 L11.5 7.5 L15.5 7.5" stroke-opacity=".7"/></g><text x="9.5" y="15" font-size="4.5" font-family="Liberation Sans" fill="#d2d2d2" text-anchor="middle">123</text></svg>
<div class="t" style="left:163px;top:392.84px;color:#ececec;font-size:12px;font-weight:normal;line-height:24px;">Copy Slots Values</div>
<svg class="a" style="left:138px;top:421px;" width="17" height="17" viewBox="0 0 17 17"><g fill="none" stroke="#d2d2d2"><path d="M2.5 14.5 L2.5 2.5 L11.5 2.5" stroke-dasharray="1.5 1" stroke-width="1.2"/><path d="M4.5 16 L4.5 4.5 L10.5 4.5 L14.5 8.5 L14.5 16 Z"/><path d="M10.5 4.5 L10.5 8.5 L14.5 8.5" stroke-opacity=".7"/><path d="M6 11.5 L11 11.5 M6 13.5 L11 13.5" stroke-opacity=".7"/></g></svg>
<div class="t" style="left:163px;top:416.84px;color:#ececec;font-size:12px;font-weight:normal;line-height:24px;">Duplicate</div>
<svg class="a" style="left:138px;top:445px;" width="17" height="17" viewBox="0 0 17 17"><g fill="none" stroke="#d2d2d2"><path d="M1.5 4 L14.5 4" stroke-width="1.5"/><path d="M5.5 3 L6.5 1.5 L9.5 1.5 L10.5 3"/><path d="M3.5 5 L3.5 15.5 L12.5 15.5 L12.5 5"/><path d="M5.5 6.5 L5.5 13.5 M10.5 6.5 L10.5 13.5"/></g><rect x="7" y="7.5" width="2" height="4.5" fill="#d2d2d2" fill-opacity=".6"/></svg>
<div class="t" style="left:163px;top:440.84px;color:#ececec;font-size:12px;font-weight:normal;line-height:24px;">Delete</div>
<div class="a" style="left:163px;top:466px;width:125px;height:1px;background:linear-gradient(to right,rgba(79,79,79,0),#4f4f4f 16px,#515151 77px,rgba(85,85,85,.35))"></div>
<div class="a" style="left:163px;top:467px;width:125px;height:1px;background:linear-gradient(to right,rgba(102,102,102,0),#666666 16px,#666666)"></div>
<div class="a" style="left:135px;top:468px;width:153px;height:24px;background:linear-gradient(#555555,#4e4e4e 30%,#4e4e4e 75%,#525252);box-sizing:border-box;border:1px solid #454545;border-radius:1px;box-shadow:inset 0 0 0 1px rgba(90,90,90,.35);"></div>
<svg class="a" style="left:138px;top:472px;" width="17" height="17" viewBox="0 0 17 17"><g fill="none" stroke="#e3a21e" stroke-width="1.2" transform="rotate(-45 8 8)"><rect x="0.8" y="5.8" width="8.4" height="4.4" rx="2.2"/><rect x="6.8" y="5.8" width="8.4" height="4.4" rx="2.2"/></g></svg>
<div class="t" style="left:163px;top:467.84px;color:#eba51c;font-size:12px;font-weight:normal;line-height:24px;">Link Mark</div>
<div class="a" style="left:163px;top:493px;width:125px;height:1px;background:linear-gradient(to right,rgba(79,79,79,0),#4f4f4f 16px,#515151 77px,rgba(85,85,85,.35))"></div>
<div class="a" style="left:163px;top:494px;width:125px;height:1px;background:linear-gradient(to right,rgba(102,102,102,0),#666666 16px,#666666)"></div>
<svg class="a" style="left:138px;top:499px;" width="17" height="17" viewBox="0 0 17 17"><g fill="none" stroke="#d2d2d2"><path d="M7 3.5 L0.5 3.5 L0.5 12.5 L7 12.5"/><path d="M12 3.5 L15.5 3.5 L15.5 12.5 L12 12.5"/><path d="M9.5 1 L9.5 15 M7.5 1.5 L11.5 1.5 M7.5 14.5 L11.5 14.5"/></g></svg>
<div class="t" style="left:163px;top:494.84px;color:#ececec;font-size:12px;font-weight:normal;line-height:24px;">Rename</div>
<div class="a" style="left:163px;top:520px;width:125px;height:1px;background:linear-gradient(to right,rgba(79,79,79,0),#4f4f4f 16px,#515151 77px,rgba(85,85,85,.35))"></div>
<div class="a" style="left:163px;top:521px;width:125px;height:1px;background:linear-gradient(to right,rgba(102,102,102,0),#666666 16px,#666666)"></div>
<svg class="a" style="left:138px;top:526px;" width="17" height="17" viewBox="0 0 17 17"><g fill="none" stroke="#d2d2d2"><path d="M8 0 L8 2 M2.5 2 L4 3.5 M13.5 2 L12 3.5 M0 7.5 L2.5 7.5 M13.5 7.5 L16 7.5"/><path d="M5.5 13 L4.2 9 Q4 4.5 8 4.2 Q12 4.5 11.8 9 L10.5 13 Z"/><path d="M6 14 L10 14 M6.5 15.5 L9.5 15.5" stroke-width="1.2"/></g><path d="M6.5 5 L8.5 5 L8.5 12.5 L7 12.5 Z" fill="#ffffff"/></svg>
<div class="t" style="left:163px;top:521.84px;color:#ececec;font-size:12px;font-weight:normal;line-height:24px;">Show Help</div>
<div class="a" style="left:485.5px;top:122.5px;width:191.5px;height:375px;background:rgba(0,0,0,.58);filter:blur(0.9px)"></div>
<div class="a" style="left:479px;top:116px;width:196px;height:379px;background:#5e5e5e;box-sizing:border-box;border:1px solid #4a4a4a;"></div>
<svg class="a" style="left:484px;top:122px;" width="17" height="17" viewBox="0 0 17 17"><g fill="none" stroke="#d2d2d2"><path d="M6 3.5 L0.5 3.5 L0.5 14.5 L10.5 14.5 L10.5 11"/><circle cx="11.5" cy="5" r="4"/><path d="M11.5 2.5 L11.5 7.5 M9 5 L14 5"/></g><path d="M4.5 6.8 L5.5 8.8 L7.6 9 L6 10.4 L6.5 12.5 L4.5 11.4 L2.5 12.5 L3 10.4 L1.4 9 L3.5 8.8 Z" fill="#f4f4f4"/></svg>
<div class="t" style="left:509px;top:117.84px;color:#ececec;font-size:12px;font-weight:normal;line-height:24px;">Add</div>
<svg class="a" style="left:658px;top:126px;" width="4" height="7" viewBox="0 0 4 7"><path d="M0 0 H1 V1 H2 V2 H3 V3 H4 V4 H3 V5 H2 V6 H1 V7 H0 Z" fill="#e8e8e8" shape-rendering="crispEdges"/></svg>
<svg class="a" style="left:484px;top:146px;" width="17" height="17" viewBox="0 0 17 17"><g fill="none" stroke="#d2d2d2"><path d="M5.5 2.5 L0.5 2.5 L0.5 7.5 L3.5 7.5 L3.5 10.5 L0.5 10.5 L0.5 15.5 L4.5 15.5 L4.5 12.5 L7.5 12.5 L7.5 15.5 L12.5 15.5 L12.5 11.5 L15.5 11.5 L15.5 5"/><circle cx="10.5" cy="5.5" r="4.5"/><path d="M10.5 3.5 L10.5 7.5 M8.5 5.5 L12.5 5.5"/></g></svg>
<div class="t" style="left:509px;top:141.84px;color:#ececec;font-size:12px;font-weight:normal;line-height:24px;">Add Extension</div>
<svg class="a" style="left:658px;top:150px;" width="4" height="7" viewBox="0 0 4 7"><path d="M0 0 H1 V1 H2 V2 H3 V3 H4 V4 H3 V5 H2 V6 H1 V7 H0 Z" fill="#e8e8e8" shape-rendering="crispEdges"/></svg>
<svg class="a" style="left:484px;top:170px;" width="17" height="17" viewBox="0 0 17 17"><g fill="none" stroke="#808080"><path d="M5.5 2.5 L0.5 2.5 L0.5 7.5 L3.5 7.5 L3.5 10.5 L0.5 10.5 L0.5 15.5 L4.5 15.5 L4.5 12.5 L7.5 12.5 L7.5 15.5 L12.5 15.5 L12.5 11.5 L15.5 11.5 L15.5 5"/><circle cx="10.5" cy="5.5" r="4.5"/><path d="M8.5 5.5 L12.5 5.5"/></g></svg>
<div class="t" style="left:509px;top:165.84px;color:#969696;font-size:12px;font-weight:normal;line-height:24px;">Remove Extension</div>
<svg class="a" style="left:658px;top:174px;" width="4" height="7" viewBox="0 0 4 7"><path d="M0 0 H1 V1 H2 V2 H3 V3 H4 V4 H3 V5 H2 V6 H1 V7 H0 Z" fill="#8a8a8a" shape-rendering="crispEdges"/></svg>
<div class="a" style="left:509px;top:191px;width:164px;height:1px;background:linear-gradient(to right,rgba(79,79,79,0),#4f4f4f 16px,#515151 116px,rgba(85,85,85,.35))"></div>
<div class="a" style="left:509px;top:192px;width:164px;height:1px;background:linear-gradient(to right,rgba(102,102,102,0),#666666 16px,#666666)"></div>
<svg class="a" style="left:484px;top:197px;" width="17" height="17" viewBox="0 0 17 17"><g fill="none" stroke="#d2d2d2"><path d="M0.5 8 Q8 0.5 15.5 8 Q8 15.5 0.5 8 Z" stroke-width="1.3"/><circle cx="8" cy="8" r="2.6"/><circle cx="8" cy="8" r=".8" fill="#d2d2d2"/></g></svg>
<div class="t" style="left:509px;top:192.84px;color:#ececec;font-size:12px;font-weight:normal;line-height:24px;">Views</div>
<svg class="a" style="left:658px;top:201px;" width="4" height="7" viewBox="0 0 4 7"><path d="M0 0 H1 V1 H2 V2 H3 V3 H4 V4 H3 V5 H2 V6 H1 V7 H0 Z" fill="#e8e8e8" shape-rendering="crispEdges"/></svg>
<svg class="a" style="left:484px;top:221px;" width="17" height="17" viewBox="0 0 17 17"><g fill="none" stroke="#d2d2d2"><circle cx="8" cy="8" r="7.3" stroke-opacity=".85"/><path d="M5.5 4.5 L12 8 L5.5 11.5 Z"/></g></svg>
<div class="t" style="left:509px;top:216.84px;color:#ececec;font-size:12px;font-weight:normal;line-height:24px;">Actions</div>
<svg class="a" style="left:658px;top:225px;" width="4" height="7" viewBox="0 0 4 7"><path d="M0 0 H1 V1 H2 V2 H3 V3 H4 V4 H3 V5 H2 V6 H1 V7 H0 Z" fill="#e8e8e8" shape-rendering="crispEdges"/></svg>
<div class="a" style="left:509px;top:242px;width:164px;height:1px;background:linear-gradient(to right,rgba(79,79,79,0),#4f4f4f 16px,#515151 116px,rgba(85,85,85,.35))"></div>
<div class="a" style="left:509px;top:243px;width:164px;height:1px;background:linear-gradient(to right,rgba(102,102,102,0),#666666 16px,#666666)"></div>
<svg class="a" style="left:484px;top:248px;" width="17" height="17" viewBox="0 0 17 17"><g fill="none" stroke="#d2d2d2"><path d="M1.5 3.5 L9.5 9.5 M1.5 12.5 L9.5 6.5" stroke-width="1.6"/><circle cx="12" cy="5" r="1.8"/><circle cx="12" cy="11" r="1.8"/></g></svg>
<div class="t" style="left:509px;top:243.84px;color:#ececec;font-size:12px;font-weight:normal;line-height:24px;">Cut</div>
<svg class="a" style="left:484px;top:272px;" width="17" height="17" viewBox="0 0 17 17"><g fill="none" stroke="#d2d2d2"><path d="M2.5 14.5 L2.5 2.5 L11.5 2.5" stroke-width="1.2"/><path d="M4.5 16.5 L4.5 4.5 L10.5 4.5 L14.5 8.5 L14.5 16.5 Z"/><path d="M10.5 4.5 L10.5 8.5 L14.5 8.5" stroke-opacity=".7"/><path d="M6 11.5 L11 11.5 M6 13.5 L11 13.5" stroke-opacity=".7"/></g></svg>
<div class="t" style="left:509px;top:267.84px;color:#ececec;font-size:12px;font-weight:normal;line-height:24px;">Copy</div>
<svg class="a" style="left:484px;top:296px;" width="17" height="17" viewBox="0 0 17 17"><g fill="none" stroke="#d2d2d2"><path d="M0.5 14.5 L0.5 0.5 L13.5 0.5 L13.5 3"/><path d="M3.5 16.5 L3.5 3.5 L11.5 3.5 L15.5 7.5 L15.5 16.5 Z"/><path d="M11.5 3.5 L11.5 7.5 L15.5 7.5" stroke-opacity=".7"/></g><text x="9.5" y="15" font-size="4.5" font-family="Liberation Sans" fill="#d2d2d2" text-anchor="middle">123</text></svg>
<div class="t" style="left:509px;top:291.84px;color:#ececec;font-size:12px;font-weight:normal;line-height:24px;">Copy Slots Values</div>
<svg class="a" style="left:484px;top:320px;" width="17" height="17" viewBox="0 0 17 17"><g fill="none" stroke="#d2d2d2"><path d="M0.5 7 L0.5 0.5 L13 0.5"/><path d="M15.5 4 L15.5 16.5 L8 16.5"/><path d="M5 5.5 L11.5 5.5 L11.5 8"/><rect x="0.5" y="8.5" width="7" height="8"/><path d="M2.5 11 L4 14 L5.5 11" stroke-opacity=".7"/></g><path d="M10 7.5 L13 7.5 L11.5 9.5 Z" fill="#f0f0f0"/></svg>
<div class="t" style="left:509px;top:315.84px;color:#ececec;font-size:12px;font-weight:normal;line-height:24px;">Save as Template</div>
<svg class="a" style="left:484px;top:344px;" width="17" height="17" viewBox="0 0 17 17"><g fill="none" stroke="#d2d2d2"><path d="M2.5 14.5 L2.5 2.5 L11.5 2.5" stroke-dasharray="1.5 1" stroke-width="1.2"/><path d="M4.5 16 L4.5 4.5 L10.5 4.5 L14.5 8.5 L14.5 16 Z"/><path d="M10.5 4.5 L10.5 8.5 L14.5 8.5" stroke-opacity=".7"/><path d="M6 11.5 L11 11.5 M6 13.5 L11 13.5" stroke-opacity=".7"/></g></svg>
<div class="t" style="left:509px;top:339.84px;color:#ececec;font-size:12px;font-weight:normal;line-height:24px;">Duplicate</div>
<svg class="a" style="left:484px;top:368px;" width="17" height="17" viewBox="0 0 17 17"><g fill="none" stroke="#d2d2d2"><path d="M1.5 4 L14.5 4" stroke-width="1.5"/><path d="M5.5 3 L6.5 1.5 L9.5 1.5 L10.5 3"/><path d="M3.5 5 L3.5 15.5 L12.5 15.5 L12.5 5"/><path d="M5.5 6.5 L5.5 13.5 M10.5 6.5 L10.5 13.5"/></g><rect x="7" y="7.5" width="2" height="4.5" fill="#d2d2d2" fill-opacity=".6"/></svg>
<div class="t" style="left:509px;top:363.84px;color:#ececec;font-size:12px;font-weight:normal;line-height:24px;">Delete</div>
<div class="a" style="left:509px;top:389px;width:164px;height:1px;background:linear-gradient(to right,rgba(79,79,79,0),#4f4f4f 16px,#515151 116px,rgba(85,85,85,.35))"></div>
<div class="a" style="left:509px;top:390px;width:164px;height:1px;background:linear-gradient(to right,rgba(102,102,102,0),#666666 16px,#666666)"></div>
<svg class="a" style="left:484px;top:395px;" width="17" height="17" viewBox="0 0 17 17"><g fill="none" stroke="#d2d2d2" stroke-width="1.2" transform="rotate(-45 8 8)"><rect x="0.8" y="5.8" width="8.4" height="4.4" rx="2.2"/><rect x="6.8" y="5.8" width="8.4" height="4.4" rx="2.2"/></g></svg>
<div class="t" style="left:509px;top:390.84px;color:#ececec;font-size:12px;font-weight:normal;line-height:24px;">Link Mark</div>
<div class="a" style="left:481px;top:415px;width:192px;height:24px;background:linear-gradient(#555555,#4e4e4e 30%,#4e4e4e 75%,#525252);box-sizing:border-box;border:1px solid #454545;border-radius:1px;box-shadow:inset 0 0 0 1px rgba(90,90,90,.35);"></div>
<svg class="a" style="left:484px;top:419px;" width="17" height="17" viewBox="0 0 17 17"><g fill="none" stroke="#e3a21e" stroke-width="1.2" transform="rotate(-45 8 7)"><rect x="0.8" y="4.8" width="8.4" height="4.4" rx="2.2"/><rect x="6.8" y="4.8" width="8.4" height="4.4" rx="2.2"/></g><path d="M9 11.5 L15 11.5" stroke="#e3a21e" stroke-width="1.3" stroke-opacity=".8"/><path d="M11.5 9.5 L11.5 14" stroke="#e3a21e" stroke-opacity=".6"/></svg>
<div class="t" style="left:509px;top:414.84px;color:#eba51c;font-size:12px;font-weight:normal;line-height:24px;">Link From 'UniversalInput'</div>
<div class="a" style="left:509px;top:440px;width:164px;height:1px;background:linear-gradient(to right,rgba(79,79,79,0),#4f4f4f 16px,#515151 116px,rgba(85,85,85,.35))"></div>
<div class="a" style="left:509px;top:441px;width:164px;height:1px;background:linear-gradient(to right,rgba(102,102,102,0),#666666 16px,#666666)"></div>
<svg class="a" style="left:484px;top:446px;" width="17" height="17" viewBox="0 0 17 17"><g fill="none" stroke="#d2d2d2"><path d="M7 3.5 L0.5 3.5 L0.5 12.5 L7 12.5"/><path d="M12 3.5 L15.5 3.5 L15.5 12.5 L12 12.5"/><path d="M9.5 1 L9.5 15 M7.5 1.5 L11.5 1.5 M7.5 14.5 L11.5 14.5"/></g></svg>
<div class="t" style="left:509px;top:441.84px;color:#ececec;font-size:12px;font-weight:normal;line-height:24px;">Rename</div>
<div class="a" style="left:509px;top:467px;width:164px;height:1px;background:linear-gradient(to right,rgba(79,79,79,0),#4f4f4f 16px,#515151 116px,rgba(85,85,85,.35))"></div>
<div class="a" style="left:509px;top:468px;width:164px;height:1px;background:linear-gradient(to right,rgba(102,102,102,0),#666666 16px,#666666)"></div>
<svg class="a" style="left:484px;top:473px;" width="17" height="17" viewBox="0 0 17 17"><g fill="none" stroke="#d2d2d2"><path d="M8 0 L8 2 M2.5 2 L4 3.5 M13.5 2 L12 3.5 M0 7.5 L2.5 7.5 M13.5 7.5 L16 7.5"/><path d="M5.5 13 L4.2 9 Q4 4.5 8 4.2 Q12 4.5 11.8 9 L10.5 13 Z"/><path d="M6 14 L10 14 M6.5 15.5 L9.5 15.5" stroke-width="1.2"/></g><path d="M6.5 5 L8.5 5 L8.5 12.5 L7 12.5 Z" fill="#ffffff"/></svg>
<div class="t" style="left:509px;top:468.84px;color:#ececec;font-size:12px;font-weight:normal;line-height:24px;">Show Help</div>
</div></body></html>
